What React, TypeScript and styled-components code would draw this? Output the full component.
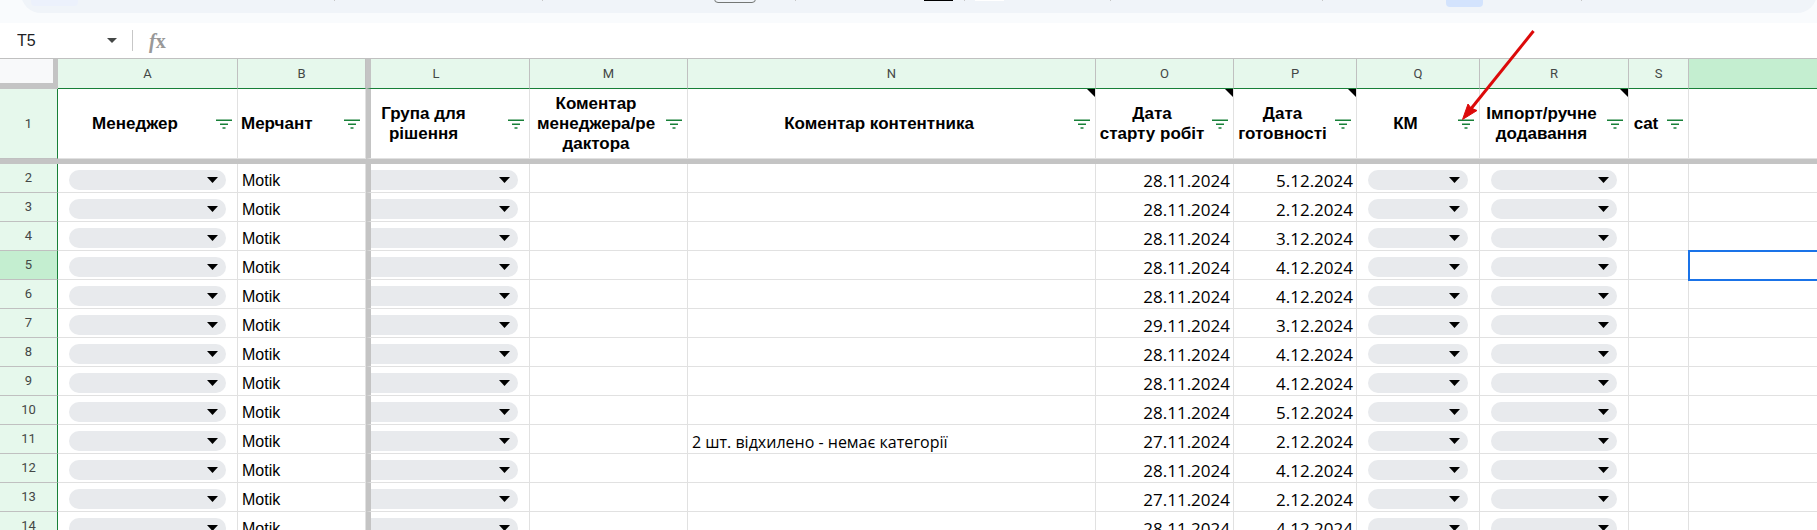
import React from "react";
import styled, { createGlobalStyle } from "styled-components";

const GREEN = "#188038";
const BAR = "#c4c4c4";
const LINE = "#e1e1e1";
const HEAD_LINE = "#c0c0c0";

/* width of column L that is scrolled away under the frozen columns */
const SCROLLED = 28;

const Global = createGlobalStyle`
  * { box-sizing: border-box; }
  body { margin: 0; background: #fff; font-family: "Liberation Sans", Arial, sans-serif; }
`;

const Page = styled.main`
  position: relative;
  height: 100vh;
  overflow: hidden;
  background: #fff;
`;

/* toolbar */
const Top = styled.header`
  height: 23px;
  overflow: hidden;
  background: #f9fbfd;
`;
const Toolbar = styled.div`
  display: flex;
  align-items: center;
  height: 40px;
  margin: -27px 0 0 21px;
  padding-left: 10px;
  border-radius: 20px;
  background: #f0f4f9;
`;
const Group = styled.div<{ $w: number }>`
  display: flex;
  align-items: center;
  flex: none;
  width: ${(p) => p.$w}px;
`;
const Divider = styled.span`
  flex: none;
  width: 1px;
  height: 16px;
  background: #c7c7c7;
`;
const MenuSearch = styled.button`
  width: 47px;
  height: 26px;
  border: 0;
  border-radius: 4px;
  background: #ecf1fc;
`;
const SizeInput = styled.input`
  width: 42px;
  height: 20px;
  margin-left: 171px;
  border: 1px solid #747775;
  border-radius: 4px;
  background: transparent;
`;
const Swatch = styled.button<{ $color: string; $gap: number }>`
  width: 29px;
  height: 16px;
  margin-left: ${(p) => p.$gap}px;
  border: 0;
  border-bottom: 4px solid ${(p) => p.$color};
  background: transparent;
`;
const ActiveTool = styled.button`
  width: 37px;
  height: 28px;
  margin-left: 123px;
  border: 0;
  border-radius: 4px;
  background: #d3e3fd;
`;

/* formula bar */
const FormulaBar = styled.div`
  display: flex;
  align-items: center;
  height: 36px;
  border-bottom: 1px solid #c0c0c0;
`;
const NameBox = styled.input`
  width: 90px;
  margin-left: 17px;
  padding: 0;
  border: 0;
  outline: 0;
  font: 16px "Liberation Sans", Arial, sans-serif;
  color: #202124;
`;
const NameDivider = styled.span`
  width: 1px;
  height: 21px;
  margin: 0 16px 0 15px;
  background: #c7c7c7;
`;
const Fx = styled.span`
  font: italic bold 20px/20px "Liberation Serif", serif;
  color: #999;
`;
const FxX = styled.span`
  font-style: normal;
`;
const Formula = styled.input`
  flex: 1;
  margin-left: 12px;
  border: 0;
  outline: 0;
  font: 16px "Liberation Sans", Arial, sans-serif;
`;

/* grid: slightly wider than the window, so that column T runs past its edge */
const Sheet = styled.table`
  width: calc(100% + 8px);
  table-layout: fixed;
  border-collapse: separate;
  border-spacing: 0;
`;
const Col = styled.col<{ $w?: number }>`
  width: ${(p) => (p.$w ? p.$w + "px" : "auto")};
`;
const Corner = styled.td`
  height: 30px;
  padding: 0;
  border-right: 5px solid ${BAR};
  border-bottom: 6px solid ${BAR};
  background: #f8f9fa;
`;
const ColHead = styled.th<{ $frozenEdge?: boolean; $active?: boolean }>`
  height: 30px;
  padding: 0 ${(p) => (p.$frozenEdge ? SCROLLED : 0)}px 0 0;
  border-right: 1px solid ${HEAD_LINE};
  border-bottom: 1px solid ${GREEN};
  border-left: ${(p) => (p.$frozenEdge ? `5px solid ${BAR}` : "0")};
  background: ${(p) => (p.$active ? "#c4eed0" : "#e6f8ec")};
  font: 13px/14px Roboto, sans-serif;
  color: #444746;
`;
const RowHead = styled.th<{ $active?: boolean }>`
  padding: 0;
  border-right: 1px solid ${GREEN};
  border-bottom: 1px solid ${HEAD_LINE};
  background: ${(p) => (p.$active ? "#c4eed0" : "#e6f8ec")};
  font: 13px/14px Roboto, sans-serif;
  color: #444746;
`;
const Cell = styled.td<{ $frozenEdge?: boolean; $align?: string; $selected?: boolean }>`
  height: 29px;
  padding: 0 3px 1px 4px;
  border-right: 1px solid ${LINE};
  border-bottom: 1px solid ${LINE};
  border-left: ${(p) => (p.$frozenEdge ? `5px solid ${BAR}` : "0")};
  outline: ${(p) => (p.$selected ? "2px solid #1a73e8" : "0")};
  outline-offset: -1px;
  vertical-align: bottom;
  text-align: ${(p) => p.$align || "left"};
  font-size: 16px;
  line-height: 20px;
  white-space: nowrap;
  color: #000;
`;
const DateCell = styled(Cell)`
  font-family: "Open Sans", sans-serif;
  font-size: 17px;
`;
const CommentCell = styled(Cell)`
  font-family: "Open Sans", sans-serif;
`;
const TitleCell = styled(Cell)`
  position: relative;
  height: 70px;
  padding: 0;
  vertical-align: middle;
  font-size: 17px;
  font-weight: bold;
`;
const TitleRow = styled.div<{ $left?: boolean }>`
  display: flex;
  align-items: center;
  padding-right: 5px;
  padding-left: ${(p) => (p.$left ? 3 : 0)}px;
  text-align: ${(p) => (p.$left ? "left" : "center")};
`;
const TitleText = styled.span<{ $scrolled?: boolean }>`
  flex: 1;
  padding-right: ${(p) => (p.$scrolled ? SCROLLED : 0)}px;
`;
const FilterButton = styled.button`
  display: flex;
  margin-left: 4px;
  padding: 0;
  border: 0;
  background: none;
`;
const NoteMark = styled.span`
  position: absolute;
  top: 0;
  right: 0;
  border-top: 8px solid #000;
  border-left: 8px solid transparent;
`;
const FreezeCell = styled.td`
  height: 5px;
  padding: 0;
  background: ${BAR};
`;
const ChipCell = styled(Cell)`
  padding: 6px 11px 2px;
  padding-left: ${(p) => (p.$frozenEdge ? 0 : 11)}px;
`;
const Chip = styled.div`
  position: relative;
  height: 20px;
`;
const ChipSelect = styled.select<{ $cut?: boolean }>`
  display: block;
  appearance: none;
  width: 100%;
  height: 20px;
  border: 0;
  border-radius: ${(p) => (p.$cut ? "0 10px 10px 0" : "10px")};
  background: #e8eaed;
`;
const ChipArrow = styled.svg`
  position: absolute;
  top: 7px;
  right: 8px;
  pointer-events: none;
`;
const Pointer = styled.svg`
  position: absolute;
  top: 28px;
  left: 1460px;
  pointer-events: none;
`;

type Column = {
  id: string;
  w?: number;
  title?: string[];
  chip?: boolean;
  note?: boolean;
  left?: boolean;
  edge?: boolean;
};

const columns: Column[] = [
  { id: "A", w: 180, title: ["Менеджер"], chip: true },
  { id: "B", w: 128, title: ["Мерчант"], left: true },
  { id: "L", w: 164, title: ["Група для", "рішення"], chip: true, edge: true },
  { id: "M", w: 158, title: ["Коментар", "менеджера/ре", "дактора"] },
  { id: "N", w: 408, title: ["Коментар контентника"], note: true },
  { id: "O", w: 138, title: ["Дата", "старту робіт"], note: true },
  { id: "P", w: 123, title: ["Дата", "готовності"], note: true },
  { id: "Q", w: 123, title: ["КМ"], chip: true },
  { id: "R", w: 149, title: ["Імпорт/ручне", "додавання"], chip: true, note: true },
  { id: "S", w: 60, title: ["cat"] },
  { id: "T" },
];

const dates: [string, string][] = [
  ["28.11.2024", "5.12.2024"],
  ["28.11.2024", "2.12.2024"],
  ["28.11.2024", "3.12.2024"],
  ["28.11.2024", "4.12.2024"],
  ["28.11.2024", "4.12.2024"],
  ["29.11.2024", "3.12.2024"],
  ["28.11.2024", "4.12.2024"],
  ["28.11.2024", "4.12.2024"],
  ["28.11.2024", "5.12.2024"],
  ["27.11.2024", "2.12.2024"],
  ["28.11.2024", "4.12.2024"],
  ["27.11.2024", "2.12.2024"],
  ["28.11.2024", "4.12.2024"],
];

const rows = dates.map(([start, ready], i) => ({
  n: i + 2,
  values: {
    B: "Motik",
    N: i + 2 === 11 ? "2 шт. відхилено - немає категорії" : "",
    O: start,
    P: ready,
  } as Record<string, string>,
}));

const FilterIcon = () => (
  <svg width="16" height="10" viewBox="0 0 16 10" fill={GREEN} aria-hidden="true">
    <path d="M0 .6h16V2H0zM4 4.4h8V6H4zM6.5 8.2h3v1.5h-3z" />
  </svg>
);

function DataCell({ col, row }: { col: Column; row: (typeof rows)[number] }) {
  if (col.chip) {
    return (
      <ChipCell $frozenEdge={col.edge}>
        <Chip>
          <ChipSelect $cut={col.edge} aria-label={`${col.title!.join(" ")}, ${row.n}`} />
          <ChipArrow width="11" height="6" viewBox="0 0 11 6" aria-hidden="true">
            <path d="M0 0h11L5.5 6z" />
          </ChipArrow>
        </Chip>
      </ChipCell>
    );
  }
  const value = row.values[col.id];
  if (col.id === "O" || col.id === "P") return <DateCell $align="right">{value}</DateCell>;
  if (col.id === "N") return <CommentCell>{value}</CommentCell>;
  return <Cell $selected={col.id === "T" && row.n === 5}>{value}</Cell>;
}

export default function App() {
  return (
    <Page>
      <Global />
      <Top>
        <Toolbar>
          <Group $w={303}>
            <MenuSearch aria-label="Меню" />
          </Group>
          <Divider />
          <Group $w={207} />
          <Divider />
          <Group $w={252}>
            <SizeInput aria-label="Розмір шрифту" />
          </Group>
          <Divider />
          <Group $w={168}>
            <Swatch $color="#000" $gap={128} aria-label="Колір тексту" />
          </Group>
          <Divider />
          <Group $w={145}>
            <Swatch $color="#fff" $gap={10} aria-label="Колір заливки" />
          </Group>
          <Divider />
          <Group $w={211} />
          <Divider />
          <Group $w={258}>
            <ActiveTool aria-label="Фільтр" />
          </Group>
          <Divider />
        </Toolbar>
      </Top>
      <FormulaBar>
        <NameBox aria-label="Клітинка" defaultValue="T5" />
        <svg width="10" height="5" viewBox="0 0 10 5" fill="#444746" aria-hidden="true">
          <path d="M0 0h10L5 5z" />
        </svg>
        <NameDivider />
        <Fx>
          f<FxX>x</FxX>
        </Fx>
        <Formula aria-label="Формула" />
      </FormulaBar>
      <Sheet>
        <colgroup>
          <Col $w={58} />
          {columns.map((c) => (
            <Col key={c.id} $w={c.w} />
          ))}
        </colgroup>
        <thead>
          <tr>
            <Corner />
            {columns.map((c) => (
              <ColHead key={c.id} scope="col" $frozenEdge={c.edge} $active={c.id === "T"}>
                {c.w ? c.id : null}
              </ColHead>
            ))}
          </tr>
        </thead>
        <tbody>
          <tr>
            <RowHead scope="row">1</RowHead>
            {columns.map((c) => (
              <TitleCell key={c.id} $frozenEdge={c.edge}>
                {c.title && (
                  <TitleRow $left={c.left}>
                    <TitleText $scrolled={c.edge}>
                      {c.title.map((line, i) => (
                        <React.Fragment key={line}>
                          {i > 0 && <br />}
                          {line}
                        </React.Fragment>
                      ))}
                    </TitleText>
                    <FilterButton aria-label="Фільтр">
                      <FilterIcon />
                    </FilterButton>
                  </TitleRow>
                )}
                {c.note && <NoteMark />}
              </TitleCell>
            ))}
          </tr>
          <tr aria-hidden="true">
            <FreezeCell colSpan={columns.length + 1} />
          </tr>
          {rows.map((r) => (
            <tr key={r.n}>
              <RowHead scope="row" $active={r.n === 5}>
                {r.n}
              </RowHead>
              {columns.map((c) => (
                <DataCell key={c.id} col={c} row={r} />
              ))}
            </tr>
          ))}
        </tbody>
      </Sheet>
      <Pointer width="78" height="94" viewBox="0 0 78 94" aria-hidden="true">
        <path d="M73.5 3L10 82" stroke="#dc0a0a" strokeWidth="3" fill="none" />
        <path d="M2.5 91.5L8 76L11 80L17 82.5Z" fill="#dc0a0a" stroke="#dc0a0a" />
      </Pointer>
    </Page>
  );
}
